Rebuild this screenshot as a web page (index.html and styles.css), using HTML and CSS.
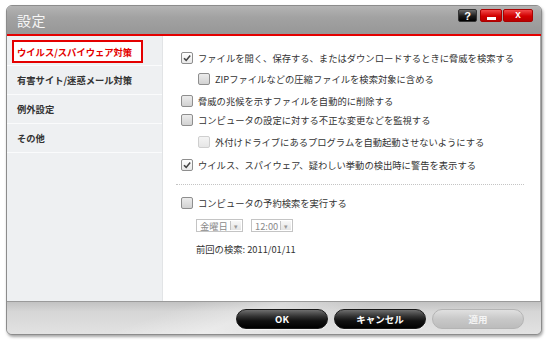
FILE: index.html
```html
<!DOCTYPE html>
<html lang="ja">
<head>
<meta charset="utf-8">
<title>設定</title>
<link rel="stylesheet" href="styles.css">
</head>
<body>
<div class="dialog">
  <div class="titlebar">
    <span class="title">設定</span>
    <div class="tbuttons">
      <span class="tb help">?</span>
      <span class="tb min"><i class="minbar"></i></span>
      <span class="tb close">x</span>
    </div>
  </div>
  <div class="main">
    <div class="sidebar">
      <div class="item active"><span class="sel">ウイルス/スパイウェア対策</span></div>
      <div class="item">有害サイト/迷惑メール対策</div>
      <div class="item">例外設定</div>
      <div class="item">その他</div>
    </div>
    <div class="content">
      <div class="row r1"><span class="cb checked"><svg viewBox="0 0 10 10" width="10" height="10"><path d="M2 5.2 L4.2 7.4 L8.2 2.6" fill="none" stroke="#444" stroke-width="1.6"/></svg></span><span>ファイルを開く、保存する、またはダウンロードするときに脅威を検索する</span></div>
      <div class="row r2 indent"><span class="cb"></span><span>ZIPファイルなどの圧縮ファイルを検索対象に含める</span></div>
      <div class="row r3"><span class="cb"></span><span>脅威の兆候を示すファイルを自動的に削除する</span></div>
      <div class="row r4"><span class="cb"></span><span>コンピュータの設定に対する不正な変更などを監視する</span></div>
      <div class="row r5 indent"><span class="cb disabled"></span><span>外付けドライブにあるプログラムを自動起動させないようにする</span></div>
      <div class="row r6"><span class="cb checked"><svg viewBox="0 0 10 10" width="10" height="10"><path d="M2 5.2 L4.2 7.4 L8.2 2.6" fill="none" stroke="#444" stroke-width="1.6"/></svg></span><span>ウイルス、スパイウェア、疑わしい挙動の検出時に警告を表示する</span></div>
      <div class="sep"></div>
      <div class="row r7"><span class="cb"></span><span>コンピュータの予約検索を実行する</span></div>
      <div class="selects">
        <span class="select s-day"><span class="val">金曜日</span><span class="arrow">▾</span></span>
        <span class="select s-time"><span class="val">12:00</span><span class="arrow">▾</span></span>
      </div>
      <div class="last">前回の検索: 2011/01/11</div>
    </div>
  </div>
  <div class="footer">
    <span class="btn dark">OK</span>
    <span class="btn dark">キャンセル</span>
    <span class="btn light">適用</span>
  </div>
</div>
</body>
</html>
```
FILE: styles.css
```css
* { box-sizing: border-box; }
html, body { margin: 0; padding: 0; background: #fff; }
body {
  font-family: "Noto Sans CJK JP", "Liberation Sans", sans-serif;
  color: #333;
  width: 550px;
  height: 342px;
  overflow: hidden;
}
.dialog {
  margin: 5px 0 0 6px;
  width: 536px;
  height: 330px;
  border: 1px solid #8c8c8c;
  border-radius: 6px;
  overflow: hidden;
  box-shadow: 1px 2px 3px rgba(0,0,0,0.35);
  display: flex;
  flex-direction: column;
  background: #ddd;
}
.titlebar {
  height: 30px;
  flex: none;
  background: linear-gradient(180deg, #b4b4b4 0%, #a2a2a2 40%, #979797 100%);
  border-bottom: 2px solid #e40000;
  display: flex;
  align-items: center;
  justify-content: space-between;
  padding: 0 8px 0 10px;
}
.title {
  color: #f6f6f6;
  font-size: 14px;
  line-height: 1;
  margin-top: -1px;
  letter-spacing: 0.5px;
}
.tbuttons {
  display: flex;
  gap: 1px;
  align-self: flex-start;
  margin-top: 3px;
}
.tb {
  height: 13px;
  display: flex;
  align-items: center;
  justify-content: center;
  color: #fff;
  font-family: "Liberation Sans", sans-serif;
  font-weight: bold;
  font-size: 11px;
  border-radius: 2px;
}
.help {
  width: 19px;
  background: linear-gradient(180deg, #6a6a6a, #1c1c1c 55%, #000);
  border: 1px solid #333;
  margin-right: 2px;
}
.min {
  width: 22px;
  background: linear-gradient(180deg, #f24a4a, #d20000 55%, #b80000);
  border: 1px solid #a00;
}
.minbar {
  display: block;
  width: 9px;
  height: 3px;
  background: #fff;
  margin-top: 5px;
}
.close {
  width: 30px;
  background: linear-gradient(180deg, #f24a4a, #d20000 55%, #b80000);
  border: 1px solid #a00;
  font-size: 10px;
  padding-bottom: 2px;
}
.main {
  flex: 1;
  display: flex;
  min-height: 0;
}
.sidebar {
  width: 156px;
  flex: none;
  background: #eef0f2;
  border-right: 1px solid #e2e4e6;
}
.item {
  height: 29px;
  border-bottom: 1px solid #fafbfc;
  font-size: 9.3px;
  font-weight: bold;
  color: #333;
  display: flex;
  align-items: center;
  padding-left: 10px;
}
.item.active {
  height: 30px;
  padding-left: 5px;
  align-items: flex-start;
  padding-top: 4px;
}
.sel {
  display: flex;
  align-items: center;
  width: 131px;
  height: 23px;
  border: 2px solid #e40000;
  background: #fff;
  color: #e40000;
  padding-left: 3px;
}
.content {
  flex: 1;
  background: #fff;
  border-right: 1px solid #a8a8a8;
  padding: 15px 16px 0 18px;
  font-size: 9.3px;
  color: #333;
}
.row {
  display: flex;
  align-items: center;
  height: 14px;
  gap: 5px;
  white-space: nowrap;
}
.row.indent { padding-left: 17px; }
.r2 { margin-top: 7px; }
.r3 { margin-top: 8px; }
.r4 { margin-top: 5px; }
.r5 { margin-top: 8px; }
.r6 { margin-top: 9px; }
.r7 { margin-top: 11px; }
.cb {
  width: 12px;
  height: 12px;
  flex: none;
  border: 1px solid #8e8e8e;
  border-radius: 2px;
  background: linear-gradient(180deg, #ececec, #d2d2d2);
  display: flex;
  align-items: center;
  justify-content: center;
}
.cb.checked {
  background: linear-gradient(180deg, #ffffff, #e8e8e8);
}
.cb.disabled {
  border-color: #cfcfcf;
  background: linear-gradient(180deg, #f4f4f4, #e6e6e6);
}
.sep {
  margin: 12px 0 0 -5px;
  border-top: 1px dotted #c4c4c4;
  width: 348px;
}
.selects {
  display: flex;
  gap: 8px;
  margin: 9px 0 0 15px;
}
.select {
  height: 13px;
  border: 1px solid #c4c4c4;
  display: flex;
  align-items: stretch;
  color: #8a8a8a;
  font-size: 9.3px;
  background: #fff;
}
.select .val {
  display: flex;
  align-items: center;
  padding-left: 3px;
}
.s-day { width: 47px; }
.s-time { width: 42px; }
.select .val { flex: 1; }
.select .arrow {
  width: 11px;
  border-left: 1px solid #c4c4c4;
  background: linear-gradient(180deg, #f8f8f8, #e4e4e4);
  color: #999;
  font-size: 7px;
  display: flex;
  align-items: center;
  justify-content: center;
  margin: 1px;
}
.last {
  margin: 10px 0 0 15px;
  font-size: 9.3px;
  color: #333;
  white-space: nowrap;
}
.footer {
  height: 33px;
  flex: none;
  border-top: 1px solid #9a9a9a;
  background:
    linear-gradient(160deg, rgba(255,255,255,0) 30%, rgba(255,255,255,0.35) 45%, rgba(255,255,255,0) 60%),
    linear-gradient(180deg, #c2c2c2 0%, #d6d6d6 30%, #e2e2e2 100%);
  display: flex;
  align-items: center;
  justify-content: flex-end;
  gap: 6px;
  padding: 0 17px 0 0;
}
.btn {
  width: 92px;
  height: 20px;
  border-radius: 10px;
  display: flex;
  align-items: center;
  justify-content: center;
  font-size: 9.5px;
  font-weight: bold;
  color: #fff;
  margin-top: 1px;
}
.btn.dark {
  background: linear-gradient(180deg, #6e6e6e 0%, #333 35%, #111 60%, #000 100%);
  border: 1px solid #1a1a1a;
  box-shadow: 0 1px 1px rgba(255,255,255,0.6);
}
.btn.light {
  background: linear-gradient(180deg, #e0e0e0 0%, #c8c8c8 50%, #bcbcbc 100%);
  border: 1px solid #b4b4b4;
  color: #f4f4f4;
}
```
